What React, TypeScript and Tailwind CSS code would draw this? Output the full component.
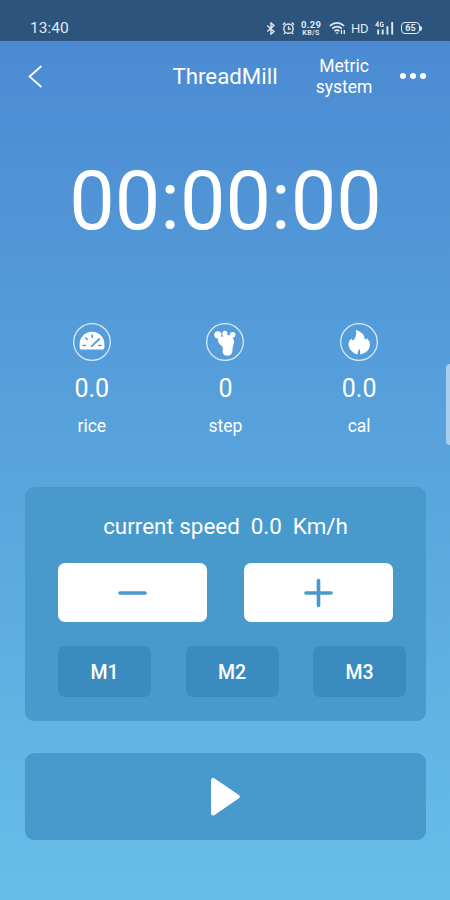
import type { ReactNode } from "react";

interface Stat {
  value: string;
  label: string;
  icon: ReactNode;
}

const GaugeIcon = () => (
  <svg viewBox="0 0 38 38" className="h-[38px] w-[38px]" fill="none">
    <circle cx="19" cy="19" r="18.3" stroke="#d5e9f8" strokeWidth="1.3" />
    <path d="M8.4 26.4Q6.3 26.4 6.6 24.4V21a12.4 12.2 0 0 1 24.8 0V24.4Q31.6 26.4 29.6 26.4Z" fill="#fff" />
    <path d="M18.6 23.4L26.2 16" stroke="#559bd6" strokeWidth="1.8" strokeLinecap="round" />
    <path d="M19.2 12v2.4M12.7 14.7l1.6 1.7M10 22.6h2.6M25.5 22.6h2.6" stroke="#559bd6" strokeWidth="1.5" strokeLinecap="round" />
  </svg>
);

const FootIcon = () => (
  <svg viewBox="0 0 38 38" className="h-[38px] w-[38px]" fill="none">
    <circle cx="19" cy="19" r="18.3" stroke="#d5e9f8" strokeWidth="1.3" />
    <g fill="#fff">
      <circle cx="11.8" cy="11.8" r="3.6" />
      <circle cx="18.8" cy="10.4" r="2.6" />
      <circle cx="26.6" cy="11.8" r="2.8" />
      <path d="M12.5 13.6Q18 14.6 19.5 11.6Q25 12 27.4 15.4Q28.8 18.6 27.4 22Q26.4 24.6 26.4 28.2Q25.9 32.6 21.4 32.8Q16.8 32.5 16.6 28.5Q17.4 25.2 16.2 23.4Q12.1 20.6 11.9 17Z" />
    </g>
  </svg>
);

const FlameIcon = () => (
  <svg viewBox="0 0 38 38" className="h-[38px] w-[38px]" fill="none">
    <circle cx="19" cy="19" r="18.3" stroke="#d5e9f8" strokeWidth="1.3" />
    <path
      d="M17.4 31.5Q8.2 28 8.5 21Q8.8 17.6 11.4 15.6Q12 17.6 13.4 17.6Q17.3 12.5 15.7 6.7Q24.6 9.7 25 16.6Q26.3 16.6 27.2 15.2Q30.2 18.4 29.9 22.4Q29 29.2 20.3 31.6Q20.8 28.2 19.2 25.8Q17.5 28.3 17.4 31.5Z"
      fill="#fff"
    />
  </svg>
);

const stats: Stat[] = [
  { value: "0.0", label: "rice", icon: <GaugeIcon /> },
  { value: "0", label: "step", icon: <FootIcon /> },
  { value: "0.0", label: "cal", icon: <FlameIcon /> },
];

const presets = ["M1", "M2", "M3"];

const StatusBar = () => (
  <div className="flex h-[41px] items-end bg-[#2c547c] pr-[28px] pb-[4px] pl-[30px] text-[#dfeaf3]">
    <span className="text-[15.5px] leading-[17px]">13:40</span>
    <div className="ml-auto flex h-[18px] items-center">
      <svg viewBox="0 0 10 14" className="mr-[6px] h-[13px] w-[10px]" fill="none" stroke="currentColor" strokeWidth="1.5">
        <path d="M1 3.8L8.2 10.3L5 13V1L8.2 3.7L1 10.2" />
      </svg>
      <svg viewBox="0 0 14 14" className="mr-[6px] h-[14px] w-[13px]" fill="none" stroke="currentColor" strokeWidth="1.5">
        <circle cx="7" cy="7.7" r="5" />
        <path d="M7 5v3h2.4M1 3.4L3.4 1.2M13 3.4L10.6 1.2M3.2 12L2 13.4M10.8 12L12 13.4" />
      </svg>
      <div className="mr-[8px] w-[20px] text-center font-bold">
        <div className="text-[9.5px] leading-[11px] tracking-[0.3px]">0.29</div>
        <div className="text-[7px] leading-[7px] tracking-[0.4px]">KB/S</div>
      </div>
      <svg viewBox="0 0 17 14" className="mr-[5px] h-[14px] w-[17px]" fill="none" stroke="currentColor" strokeWidth="1.7">
        <path d="M.8 4.8Q8 -1 15.2 4.8M3.2 7.5Q8 3.6 12.8 7.5M5.5 10.1Q8 8.1 10.5 10.1" />
        <path d="M8 13.2L6.3 11.4h3.4Z" fill="currentColor" stroke="none" />
        <path d="M12.5 9v4M15.3 9v4" strokeWidth="1.3" />
      </svg>
      <span className="mr-[7px] w-[17px] text-[13px] leading-[15px] tracking-[-0.3px]">HD</span>
      <svg viewBox="0 0 19 14" className="mr-[7px] h-[14px] w-[19px]" fill="none" stroke="currentColor">
        <path d="M3 6V1L.8 4.3H4M8.2 1.8Q5.3 .4 5.3 3.4Q5.3 6.4 8.2 5.2V3.5H7" strokeWidth="1.1" />
        <path d="M3.2 8.5v5M7.7 8.5v5M12.4 5.2v8.3M17.2 1v12.5" strokeWidth="1.9" />
      </svg>
      <div className="flex h-[12px] w-[19px] items-center justify-center rounded-[4px] border-[1.5px] border-[#dfeaf3] text-[9px] leading-none font-bold">65</div>
      <div className="h-[5px] w-[2px] rounded-r-sm bg-[#dfeaf3]" />
    </div>
  </div>
);

const App = () => {
  return (
    <div className="relative flex h-[900px] w-[450px] flex-col overflow-hidden bg-linear-to-b from-[#4a88d1] to-[#67bee8] font-[Roboto,sans-serif] text-white">
      <StatusBar />

      <header className="grid h-[71px] grid-cols-[150px_150px_88px_62px] items-center">
        <svg viewBox="0 0 16 24" className="-mt-[2px] ml-[28px] h-[24px] w-[16px]" fill="none" stroke="currentColor" strokeWidth="1.8">
          <path d="M13.4 2L1.6 12.6L13.4 23" />
        </svg>
        <h1 className="-mt-[2px] text-center text-[22.3px] leading-7">ThreadMill</h1>
        <button className="text-center text-[17.5px] leading-[20.5px]">
          Metric
          <br />
          system
        </button>
        <div className="-mt-[1px] ml-[12px] flex gap-[4px]">
          <span className="h-[6px] w-[6px] rounded-full bg-white" />
          <span className="h-[6px] w-[6px] rounded-full bg-white" />
          <span className="h-[6px] w-[6px] rounded-full bg-white" />
        </div>
      </header>

      <div className="mt-[41px] h-[96px] pt-[1px] pl-[1px] text-center text-[81px] leading-[96px]">00:00:00</div>

      <div className="mr-[24px] ml-[25px] mt-[74px] grid h-[164px] grid-cols-3">
        {stats.map((stat) => (
          <div key={stat.label} className="flex flex-col items-center">
            {stat.icon}
            <div className="mt-[13px] text-[25px] leading-[30px]">{stat.value}</div>
            <div className="mt-[11px] text-[17.5px] leading-[22px]">{stat.label}</div>
          </div>
        ))}
      </div>

      <section className="mr-[24px] ml-[25px] h-[234px] rounded-[9px] bg-[#489acd] px-[33px] pt-[25px]">
        <div className="flex justify-center gap-[11px] text-[22.4px] leading-[28px]">
          <span>current speed</span>
          <span>0.0</span>
          <span>Km/h</span>
        </div>
        <div className="mt-[23px] flex gap-[37px]">
          <button className="flex h-[59px] w-[149px] items-center justify-center rounded-[7px] bg-white">
            <svg viewBox="0 0 30 30" className="h-[30px] w-[30px]" stroke="#489acd" strokeWidth="3.6" strokeLinecap="round">
              <path d="M2 15H27" />
            </svg>
          </button>
          <button className="flex h-[59px] w-[149px] items-center justify-center rounded-[7px] bg-white">
            <svg viewBox="0 0 30 30" className="h-[30px] w-[30px]" stroke="#489acd" strokeWidth="3.6" strokeLinecap="round">
              <path d="M2 15H27M14.5 2.6V27.4" />
            </svg>
          </button>
        </div>
        <div className="mt-[24px] flex gap-[34.5px]">
          {presets.map((name) => (
            <button key={name} className="h-[51px] w-[93px] shrink-0 rounded-[7px] bg-[#3a8cc0] pt-[2px] text-[19.5px] font-medium">
              {name}
            </button>
          ))}
        </div>
      </section>

      <button className="mt-[32px] mr-[24px] ml-[25px] flex h-[87px] items-center justify-center rounded-[9px] bg-[#489acd]">
        <svg viewBox="0 0 30 40" className="h-[40px] w-[30px]" fill="#fff" stroke="#fff" strokeWidth="4" strokeLinejoin="round">
          <path d="M2.1 2.9V36.5L26.8 19.7Z" />
        </svg>
      </button>

      {/* edge handle */}
      <div className="absolute top-[364px] right-0 h-[81px] w-[4px] rounded-l-full bg-[#a9cdec]" />
    </div>
  );
};

export default App;
